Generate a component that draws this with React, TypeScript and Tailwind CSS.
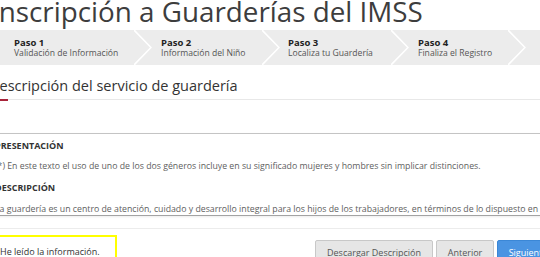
import React from 'react';

const STEPS = [
  { title: 'Paso 1', label: 'Validación de Información', width: 'w-[143px]', pad: 'pl-[23px]' },
  { title: 'Paso 2', label: 'Información del Niño', width: 'w-[110px]', pad: 'pl-[9px]' },
  { title: 'Paso 3', label: 'Localiza tu Guardería', width: 'w-[111px]', pad: 'pl-[8px]' },
  { title: 'Paso 4', label: 'Finaliza el Registro', width: 'w-[99px]', pad: 'pl-[9px]' },
];

function Chevron() {
  return (
    <svg width="18" height="35" viewBox="0 0 18 35" className="shrink-0 block">
      <polyline points="0,0 17,17.5 0,35" fill="none" stroke="#ffffff" strokeWidth="1.6" />
    </svg>
  );
}

export default function App() {
  return (
    <div className="w-[540px] h-[257px] overflow-hidden bg-white font-['Open_Sans',sans-serif]">
      <div className="ml-[-9px] w-[580px]">
        {/* Title */}
        <h1 className="mt-[-6px] text-[27.8px] leading-[34px] text-[#3d3d3d] font-normal whitespace-nowrap">
          Inscripción a Guarderías del IMSS
        </h1>

        {/* Stepper */}
        <div className="mt-[2px] h-[35px] bg-[#ececec] flex">
          {STEPS.map((s) => (
            <React.Fragment key={s.title}>
              <div className={`${s.width} ${s.pad} shrink-0 flex flex-col justify-center`}>
                <div className="text-[9.5px] leading-[11px] font-bold text-[#222]">{s.title}</div>
                <div className="text-[8.6px] leading-[11px] text-[#555] whitespace-nowrap">{s.label}</div>
              </div>
              <Chevron />
            </React.Fragment>
          ))}
        </div>

        {/* Section heading */}
        <div className="mt-[11px]">
          <h2 className="ml-[-2px] text-[14.5px] leading-[20px] text-[#333] font-normal whitespace-nowrap">
            Descripción del servicio de guardería
          </h2>
          <div className="mt-[3px] flex items-start">
            <div className="w-[17px] h-[2px] bg-[#a8243a]" />
            <div className="flex-1 h-[1px] bg-[#e8e8e8]" />
          </div>
        </div>

        {/* Content panel */}
        <div className="mt-[32px] border-t border-[#c4c4c4] shadow-[0_1px_2px_rgba(0,0,0,0.08)] border-b border-b-[#a3a3a3] pt-[6px] pl-[4px]">
          <div className="text-[9px] leading-[12px] font-bold text-[#333]">PRESENTACIÓN</div>
          <p className="mt-[8px] text-[8.75px] leading-[12px] text-[#5e5e5e] whitespace-nowrap">
            (*) En este texto el uso de uno de los dos géneros incluye en su significado mujeres y hombres sin implicar distinciones.
          </p>
          <div className="mt-[10px] text-[9px] leading-[12px] font-bold text-[#333]">DESCRIPCIÓN</div>
          <p className="mt-[9px] text-[8.75px] leading-[12px] text-[#5e5e5e] whitespace-nowrap">
            La guardería es un centro de atención, cuidado y desarrollo integral para los hijos de los trabajadores, en términos de lo dispuesto en la Ley del Seguro Social.
          </p>
        </div>

        <div className="mt-[12px] h-[1px] bg-[#ececec]" />

        {/* Footer */}
        <div className="mt-[6px] flex items-start">
          <div className="w-[126px] h-[40px] shrink-0 border-2 border-[#ffff00] pl-[7px] pt-[9px] text-[9px] leading-[12px] text-[#333] whitespace-nowrap">
            He leído la información.
          </div>
          <div className="ml-[198px] flex gap-[3px] pt-[5px]">
            <button className="w-[118px] h-[26px] rounded-[2px] border border-[#c8c8c8] bg-[#e6e6e6] text-[9px] leading-[12px] text-[#555] whitespace-nowrap">
              Descargar Descripción
            </button>
            <button className="w-[58px] h-[26px] rounded-[2px] border border-[#c8c8c8] bg-[#e6e6e6] text-[9px] leading-[12px] text-[#555] whitespace-nowrap">
              Anterior
            </button>
            <button className="w-[62px] h-[26px] rounded-[2px] border border-[#3b87d6] bg-[#4a94e2] text-[9px] leading-[12px] text-white whitespace-nowrap">
              Siguiente
            </button>
          </div>
        </div>
      </div>
    </div>
  );
}
